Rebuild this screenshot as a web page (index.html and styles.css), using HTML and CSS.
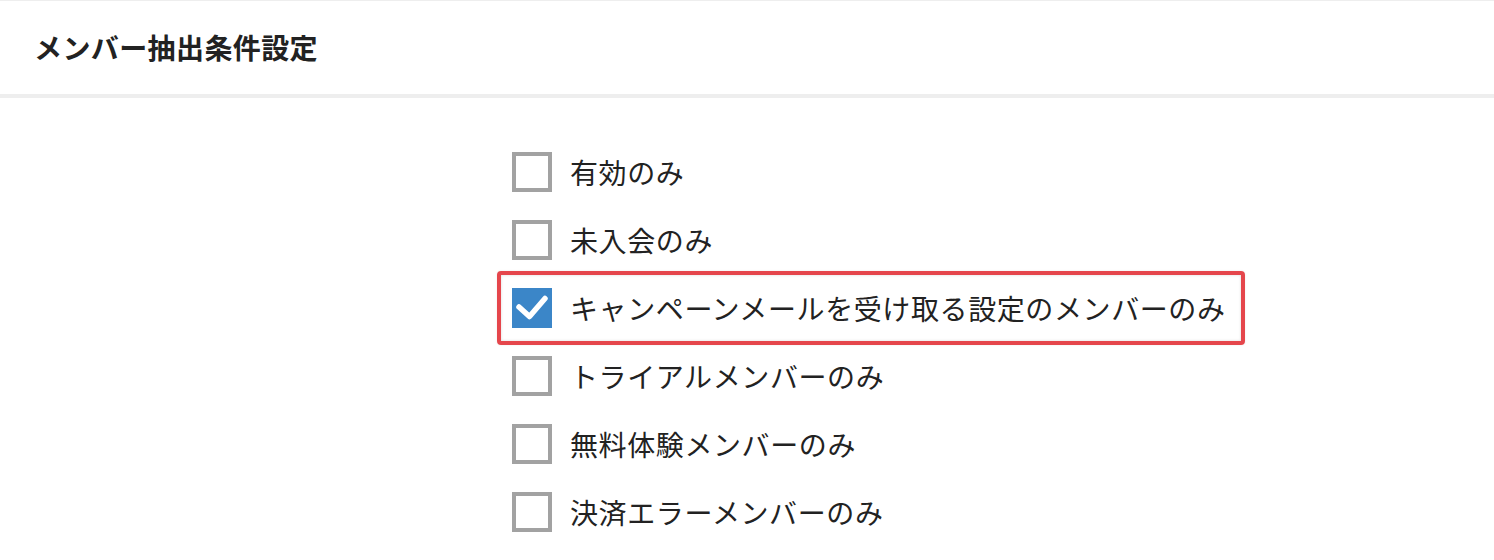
FILE: index.html
```html
<!DOCTYPE html>
<html lang="ja">
<head>
<meta charset="utf-8">
<link rel="stylesheet" href="styles.css">
</head>
<body>
<header class="panel-header">
  <h1 class="panel-title">メンバー抽出条件設定</h1>
</header>
<main class="panel-body">
  <ul class="option-list">
    <li class="option">
      <span class="checkbox"></span>
      <span class="option-label">有効のみ</span>
    </li>
    <li class="option">
      <span class="checkbox"></span>
      <span class="option-label">未入会のみ</span>
    </li>
    <li class="option option-highlight">
      <span class="checkbox checkbox-checked">
        <svg viewBox="0 0 40 40" width="40" height="40"><path d="M7 19 L17.5 28.5 L33 10.5" fill="none" stroke="#fff" stroke-width="5.5" stroke-linecap="round" stroke-linejoin="round"/></svg>
      </span>
      <span class="option-label">キャンペーンメールを受け取る設定のメンバーのみ</span>
    </li>
    <li class="option">
      <span class="checkbox"></span>
      <span class="option-label">トライアルメンバーのみ</span>
    </li>
    <li class="option">
      <span class="checkbox"></span>
      <span class="option-label">無料体験メンバーのみ</span>
    </li>
    <li class="option">
      <span class="checkbox"></span>
      <span class="option-label">決済エラーメンバーのみ</span>
    </li>
  </ul>
</main>
</body>
</html>
```
FILE: styles.css
```css
*, *::before, *::after { box-sizing: border-box; }
html, body { margin: 0; padding: 0; background: #fff; }
body {
  font-family: "Noto Sans CJK JP", "Noto Sans", sans-serif;
  color: #222;
}
.panel-header {
  border-top: 1px solid #eeeeee;
  border-bottom: 4px solid #eeeeee;
  height: 98px;
  display: flex;
  align-items: center;
  padding: 0 0 2px 34px;
}
.panel-title {
  margin: 0;
  font-size: 28px;
  font-weight: 700;
  color: #222;
  line-height: 1;
  letter-spacing: 0.4px;
}
.panel-body {
  padding: 54px 0 0 512px;
}
.option-list {
  list-style: none;
  margin: 0;
  padding: 0;
  display: flex;
  flex-direction: column;
  gap: 28px;
}
.option {
  display: flex;
  align-items: center;
  gap: 18px;
  height: 40px;
  position: relative;
}
.checkbox {
  width: 40px;
  height: 40px;
  border: 4px solid #a2a2a2;
  background: #fff;
  flex: none;
  display: block;
}
.checkbox-checked {
  border: none;
  background: #3b86c8;
}
.checkbox-checked svg { display: block; }
.option-label {
  font-size: 28px;
  line-height: 40px;
  color: #222;
  white-space: nowrap;
  letter-spacing: 0.6px;
}
.option-highlight::after {
  content: "";
  position: absolute;
  left: -15px;
  top: -17px;
  width: 748px;
  height: 74px;
  border: 4px solid #e5464c;
  border-radius: 4px;
  box-shadow: inset 0 0 3px rgba(0,0,0,0.15), 0 0 2px rgba(0,0,0,0.1);
  pointer-events: none;
}
```
